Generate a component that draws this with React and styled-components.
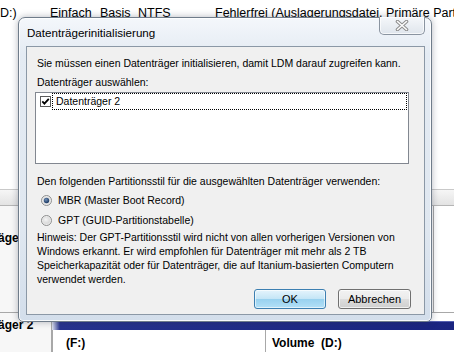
import React from 'react'
import styled, { createGlobalStyle } from 'styled-components'

const GlobalStyle = createGlobalStyle`
  html, body {
    margin: 0;
    padding: 0;
    width: 454px;
    height: 352px;
    overflow: hidden;
    background: #fff;
    font-family: "Liberation Sans", Arial, sans-serif;
  }
`

// ---- background: disk management console ----

const Desktop = styled.div`
  position: relative;
  width: 454px;
  height: 352px;
  overflow: hidden;
  display: flex;
  flex-direction: column;
  background: #fff;
`

const ListRow = styled.div`
  display: flex;
  align-items: center;
  height: 25px;
  flex: none;
  font-size: 12.5px;
  color: #000;
  white-space: nowrap;
`

const ListCell = styled.div`
  width: ${p => p.w ? p.w + 'px' : 'auto'};
  flex: ${p => p.w ? 'none' : '1'};
  overflow: hidden;
`

const Spacer = styled.div`
  height: ${p => p.h}px;
  flex: none;
`

const ScrollBand = styled.div`
  height: 15px;
  flex: none;
  border-top: 1px solid #c9c9c9;
  border-bottom: 1px solid #b5b5b5;
  background: linear-gradient(#f6f6f6, #e3e3e3);
`

const DiskRow = styled.div`
  display: flex;
  height: ${p => p.h}px;
  flex: none;
  border-top: ${p => p.top ? '1px solid #a8a8a8' : 'none'};
`

const DiskLabel = styled.div`
  width: 52px;
  flex: none;
  overflow: hidden;
  background: #f7f7f7;
  border-right: 1px solid #a8a8a8;
  font-size: 12px;
  line-height: 14px;
  font-weight: bold;
  white-space: nowrap;
  padding-top: ${p => p.pad}px;
  box-sizing: border-box;
`

const LabelText = styled.div`
  margin-left: -44px;
`

const Volumes = styled.div`
  flex: 1;
  display: flex;
  flex-direction: column;
`

const VolumeBar = styled.div`
  height: 8px;
  margin-top: 8px;
  background: linear-gradient(90deg, #dfe3f2 0px, #27338e 8px, #1a2480 100%);
  border-top: 1px solid #5560b0;
`

const VolumeCells = styled.div`
  flex: 1;
  display: flex;
`

const VolumeCell = styled.div`
  width: ${p => p.w ? p.w + 'px' : 'auto'};
  flex: ${p => p.w ? 'none' : '1'};
  border-left: 1px solid #a8a8a8;
  padding: 6px 0 0 ${p => p.pad}px;
  font-size: 12px;
  line-height: 14px;
  font-weight: bold;
  white-space: nowrap;
  overflow: hidden;
`

const RightStrip = styled.div`
  flex: 1;
  display: flex;
  justify-content: flex-end;
`

const RightCell = styled.div`
  width: 20px;
  border-left: 1px solid #a8a8a8;
`

// ---- dialog ----

const Dialog = styled.div`
  position: absolute;
  left: 18px;
  top: 17px;
  width: 414px;
  height: 305px;
  box-sizing: border-box;
  display: flex;
  flex-direction: column;
  border: 1px solid #6f7c8a;
  border-radius: 7px 7px 5px 5px;
  background: linear-gradient(180deg, #f4f7fb 0%, #e4ebf3 12%, #dfe7f0 70%, #d3deeb 100%);
  box-shadow: 0 0 7px rgba(40, 50, 70, 0.35), inset 0 0 0 1px rgba(255, 255, 255, 0.8);
`

const TitleBar = styled.div`
  display: flex;
  justify-content: space-between;
  align-items: flex-start;
  height: 28px;
  flex: none;
  padding: 0 6px 0 8px;
`

const Title = styled.div`
  font-size: 11.6px;
  line-height: 30px;
  color: #000;
  white-space: nowrap;
`

const CloseButton = styled.div`
  width: 46px;
  height: 18px;
  margin-top: -1px;
  box-sizing: border-box;
  border: 1px solid #8a94a0;
  border-top: none;
  border-radius: 0 0 5px 5px;
  background: linear-gradient(#f5f7fa, #dfe5ec);
  display: flex;
  align-items: center;
  justify-content: center;
  box-shadow: inset 0 0 0 1px rgba(255, 255, 255, 0.7);
`

const Client = styled.div`
  flex: 1;
  margin: 0 6px 6px 7px;
  border: 1px solid #8b98a6;
  background: #f0f0f0;
  display: flex;
  flex-direction: column;
  padding: 9px 13px 0 10px;
  font-size: 10.5px;
  line-height: 14px;
  color: #000;
`

const Line = styled.div`
  white-space: nowrap;
  margin-top: ${p => p.mt || 0}px;
`

const ListBox = styled.div`
  margin: 3px 2px 0 -2px;
  height: 72px;
  box-sizing: border-box;
  border: 1px solid #828790;
  background: #fff;
`

const ListItem = styled.div`
  display: flex;
  align-items: center;
  height: 17px;
  padding-left: 4px;
`

const FocusLabel = styled.div`
  flex: 1;
  margin: 0 1px 0 1px;
  height: 17px;
  box-sizing: border-box;
  border: 1px dotted #000;
  padding-left: 3px;
  line-height: 15px;
`

const RadioRow = styled.div`
  display: flex;
  align-items: center;
  gap: 6px;
  height: 14px;
  margin: ${p => p.mt}px 0 0 4px;
`

const ButtonRow = styled.div`
  display: flex;
  justify-content: flex-end;
  gap: 12px;
  margin-top: 3px;
`

const Button = styled.div`
  width: ${p => p.w}px;
  height: 20px;
  box-sizing: border-box;
  border-radius: 3px;
  display: flex;
  align-items: center;
  justify-content: center;
  font-size: 11px;
  border: 1px solid ${p => p.primary ? '#3c7fb1' : '#707070'};
  background: ${p => p.primary
    ? 'linear-gradient(#e5f4fc 0%, #c4e5f6 50%, #98d1ef 51%, #b3e0f7 100%)'
    : 'linear-gradient(#f2f2f2 0%, #ebebeb 50%, #dddddd 51%, #cfcfcf 100%)'};
  box-shadow: inset 0 0 0 1px ${p => p.primary ? 'rgba(255,255,255,0.6)' : 'rgba(255,255,255,0.7)'};
`

const CheckBox = () => (
  <svg width="11" height="11" viewBox="0 0 11 11">
    <rect x="0.5" y="0.5" width="10" height="10" fill="#fff" stroke="#5a5a5a" />
    <path d="M2.3 5.4 L4.4 7.6 L8.8 2.8" fill="none" stroke="#000" strokeWidth="1.8" />
  </svg>
)

const Radio = ({ checked }) => (
  <svg width="11" height="11" viewBox="0 0 11 11">
    <defs>
      <radialGradient id={checked ? 'rOn' : 'rOff'} cx="0.4" cy="0.35" r="0.7">
        <stop offset="0" stopColor={checked ? '#6e8eb6' : '#f4f4f4'} />
        <stop offset="1" stopColor={checked ? '#15325c' : '#d6d6d6'} />
      </radialGradient>
    </defs>
    <circle cx="5.5" cy="5.5" r="5" fill="#ececec" stroke="#8e8f8f" />
    <circle cx="5.5" cy="5.5" r="3.8" fill="#e2e2e2" />
    <circle cx="5.5" cy="5.5" r={checked ? 2.7 : 3.2} fill={`url(#${checked ? 'rOn' : 'rOff'})`} />
  </svg>
)

const CloseGlyph = () => (
  <svg width="14" height="11" viewBox="0 0 14 11">
    <path d="M2.5 1.5 L11.5 9.5 M11.5 1.5 L2.5 9.5" stroke="#8c8c8c" strokeWidth="3.6" strokeLinecap="round" />
    <path d="M2.5 1.5 L11.5 9.5 M11.5 1.5 L2.5 9.5" stroke="#fbfbfb" strokeWidth="1.6" strokeLinecap="round" />
  </svg>
)

const App = () => {
  return (
    <>
      <GlobalStyle />
      <Desktop>
        <ListRow>
          <ListCell w={50}>D:)</ListCell>
          <ListCell w={50}>Einfach</ListCell>
          <ListCell w={38}>Basis</ListCell>
          <ListCell w={77}>NTFS</ListCell>
          <ListCell>Fehlerfrei (Auslagerungsdatei, Primäre Partition)</ListCell>
        </ListRow>
        <Spacer h={164} />
        <ScrollBand />
        <DiskRow h={106}>
          <DiskLabel pad={25}><LabelText>Datenträger 1</LabelText></DiskLabel>
          <RightStrip><RightCell /></RightStrip>
        </DiskRow>
        <DiskRow h={40} top>
          <DiskLabel pad={5}><LabelText>Datenträger 2</LabelText></DiskLabel>
          <Volumes>
            <VolumeBar />
            <VolumeCells>
              <VolumeCell w={199} pad={13}>(F:)</VolumeCell>
              <VolumeCell pad={6}>Volume&nbsp;&nbsp;(D:)</VolumeCell>
            </VolumeCells>
          </Volumes>
        </DiskRow>

        <Dialog>
          <TitleBar>
            <Title>Datenträgerinitialisierung</Title>
            <CloseButton><CloseGlyph /></CloseButton>
          </TitleBar>
          <Client>
            <Line>Sie müssen einen Datenträger initialisieren, damit LDM darauf zugreifen kann.</Line>
            <Line mt={5}>Datenträger auswählen:</Line>
            <ListBox>
              <ListItem>
                <CheckBox />
                <FocusLabel>Datenträger 2</FocusLabel>
              </ListItem>
            </ListBox>
            <Line mt={10}>Den folgenden Partitionsstil für die ausgewählten Datenträger verwenden:</Line>
            <RadioRow mt={5}><Radio checked />MBR (Master Boot Record)</RadioRow>
            <RadioRow mt={6}><Radio />GPT (GUID-Partitionstabelle)</RadioRow>
            <Line mt={3}>
              Hinweis: Der GPT-Partitionsstil wird nicht von allen vorherigen Versionen von<br />
              Windows erkannt. Er wird empfohlen für Datenträger mit mehr als 2 TB<br />
              Speicherkapazität oder für Datenträger, die auf Itanium-basierten Computern<br />
              verwendet werden.
            </Line>
            <ButtonRow>
              <Button primary w={72}>OK</Button>
              <Button w={73}>Abbrechen</Button>
            </ButtonRow>
          </Client>
        </Dialog>
      </Desktop>
    </>
  )
}

export default App
